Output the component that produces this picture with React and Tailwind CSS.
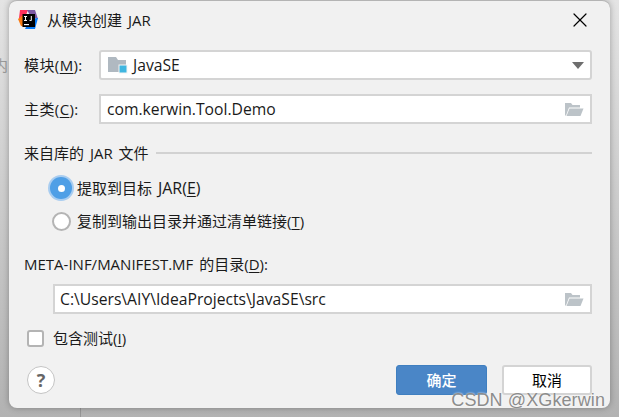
import { X } from 'lucide-react'

function FolderOpen() {
  return (
    <svg width="20" height="16" viewBox="0 0 20 16" className="shrink-0">
      <path d="M1 14.5V2h6l1.5 2H16v2.5H5L2 14.5z" fill="#bcc3c8" />
      <path d="M5.5 7.500H19.500L16.500 15H2.500z" fill="#bcc3c8" />
    </svg>
  )
}

function ModuleIcon() {
  return (
    <svg width="20" height="18" viewBox="0 0 20 18" className="shrink-0">
      <path d="M0 1h8l2 3h8v12H0z" fill="#b0b9c1" />
      <rect x="11" y="9" width="8" height="8" fill="#40b6e0" stroke="#f4f4f4" strokeWidth="1" />
    </svg>
  )
}

function IdeaLogo() {
  return (
    <svg width="20" height="21" viewBox="0 0 20 21" className="shrink-0">
      <path d="M2 1h8L6 11 1 9z" fill="#fe315d" />
      <path d="M9 1l8 0 3 9-7-2z" fill="#7c59a4" />
      <path d="M0 10l5-4 3 12-5-1z" fill="#f97a12" />
      <path d="M7 20l10 0 3-11-8 1z" fill="#087cfa" />
      <rect x="4.500" y="5" width="12.500" height="13" fill="#000" />
      <rect x="6" y="15" width="5" height="1.200" fill="#fff" />
      <path d="M6 7h3v.9h-1v3.200h1v.9H6v-.9h1V7.900H6z" fill="#fff" />
      <path d="M12.800 7h1v4c0 .8-.5 1.100-1.200 1.100-.7 0-1.100-.3-1.400-.8l.7-.5c.2.300.4.400.6.400.200 0 .3-.1.300-.4z" fill="#fff" />
    </svg>
  )
}

function Field({ children, className = '' }) {
  return (
    <div className={`flex h-[30px] min-w-0 flex-1 items-center justify-between border-2 border-[#d4d4d4] bg-white text-[15.700px] ${className}`}>
      {children}
    </div>
  )
}

function Key({ children }) {
  return <span className="underline underline-offset-2">{children}</span>
}

export default function App() {
  return (
    <div className="relative h-[417px] w-[619px] overflow-hidden bg-linear-to-b from-[#e4e4e4] to-[#b2b2b2] pl-[9px] font-['Open_Sans','Noto_Sans_CJK_SC',sans-serif] text-[15px] leading-[20px] text-[#1a1a1a] [word-spacing:2px]">
      {/* ghost of the window behind the dialog */}
      <span className="absolute left-[-7px] top-[55px] text-[#9a9a9a]">内</span>
      <div className="absolute bottom-0 left-[80px] h-[9px] w-px bg-[#969696]" />

      <div className="relative flex h-[408px] w-[601px] flex-col rounded-[8px] border-t border-[#b4b4b4] bg-[#f1f1f1] shadow-[0_0_6px_rgba(0,0,0,0.3)]">
        <div className="flex h-[37px] items-center pl-[9px] pr-[18px]">
          <IdeaLogo />
          <span className="ml-[9px]">从模块创建 JAR</span>
          <X className="ml-auto text-black" size={24} strokeWidth={1.2} />
        </div>

        <div className="flex flex-col pl-[15px] pr-[18px] pt-[12px]">
          <div className="flex items-center gap-[15px]">
            <span className="w-[60px] whitespace-nowrap tracking-[0.4px]">模块(<Key>M</Key>):</span>
            <Field className="rounded-[3px] pl-[7px] pr-[6px]">
              <span className="flex items-center gap-[5px]">
                <ModuleIcon />
                JavaSE
              </span>
              <svg width="12" height="7" viewBox="0 0 12 7"><path d="M0 0h12L6 7z" fill="#6e6e6e" /></svg>
            </Field>
          </div>
          <div className="mt-[14px] flex items-center gap-[15px]">
            <span className="w-[60px] whitespace-nowrap tracking-[0.4px]">主类(<Key>C</Key>):</span>
            <Field className="pl-[6px] pr-[6px]">
              <span>com.kerwin.Tool.Demo</span>
              <FolderOpen />
            </Field>
          </div>

          <div className="mt-[19px] flex items-center gap-[7px]">
            <span className="whitespace-nowrap">来自库的 JAR 文件</span>
            <div className="h-[2px] flex-1 bg-[#d2d2d2]" />
          </div>

          <div className="mt-[14px] flex items-center pl-[26px]">
            <div className="flex h-[22px] w-[22px] items-center justify-center rounded-full bg-[#4f9fe6] ring-2 ring-[#a9cdf0]">
              <div className="h-[7px] w-[7px] rounded-full bg-white" />
            </div>
            <span className="ml-[5px]">提取到目标 <span className="text-[16px]">JAR(<Key>E</Key>)</span></span>
          </div>
          <div className="mt-[12px] flex items-center pl-[28px]">
            <div className="h-[19px] w-[19px] rounded-full border-2 border-[#b4b4b4] bg-white" />
            <span className="ml-[6px]">复制到输出目录并通过清单链接(<Key>T</Key>)</span>
          </div>

          <div className="mt-[23px] whitespace-nowrap">META-INF/MANIFEST.MF 的目录(<Key>D</Key>):</div>
          <div className="mt-[10px] flex pl-[29px]">
            <Field className="pl-[5px] pr-[6px]">
              <span>C:\Users\AIY\IdeaProjects\JavaSE\src</span>
              <FolderOpen />
            </Field>
          </div>

          <div className="mt-[14px] flex items-center pl-[3px]">
            <div className="h-[17px] w-[17px] rounded-[3px] border-2 border-[#b4b4b4] bg-white" />
            <span className="ml-[9px]">包含测试(<Key>I</Key>)</span>
          </div>
        </div>

        <div className="mt-auto flex items-center justify-between pb-[13px] pl-[18px] pr-[18px]">
          <div className="flex h-[28px] w-[28px] items-center justify-center rounded-full border border-[#c4c4c4] bg-white text-[18px] font-bold text-[#666666]">?</div>
          <div className="flex gap-[15px]">
            <div className="flex h-[30px] w-[91px] items-center justify-center rounded-[3px] border border-[#3f7fc0] bg-[#4a86c7] font-medium text-white">确定</div>
            <div className="flex h-[30px] w-[90px] items-center justify-center rounded-[3px] border-2 border-[#d4d4d4] bg-white text-black">取消</div>
          </div>
        </div>

        <span className="absolute bottom-[-2px] right-[5px] font-['Liberation_Sans',sans-serif] text-[18px] tracking-[0.1px] text-[#8c8c8c] [word-spacing:0] [text-shadow:0_0_2px_#ffffff]">CSDN @XGkerwin</span>
      </div>
    </div>
  )
}
